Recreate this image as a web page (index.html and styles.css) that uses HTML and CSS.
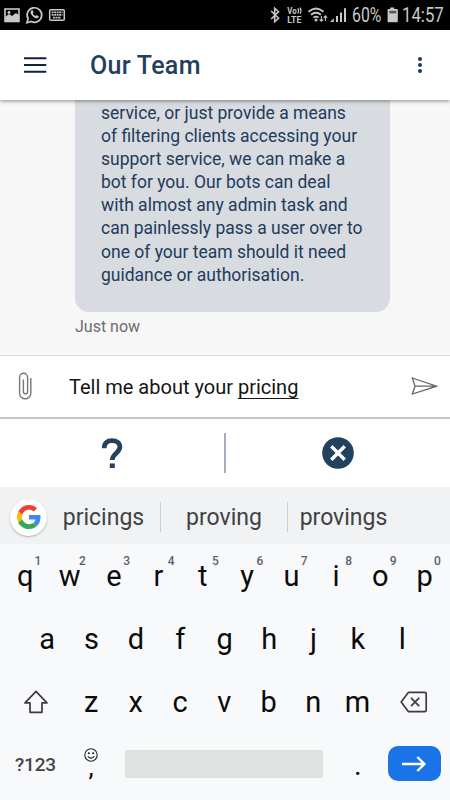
FILE: index.html
```html
<!DOCTYPE html>
<html lang="en">
<head>
<meta charset="utf-8">
<title>Our Team</title>
<link rel="stylesheet" href="styles.css">
</head>
<body>
<div class="phone">
  <div class="status">
    <svg class="status-left" width="70" height="30" viewBox="0 0 70 30" fill="none" stroke="#c8c8c8">
      <rect x="5" y="9" width="14" height="12.5" stroke-width="1.6"/>
      <path d="M5 20v-3l4-3 3 2 4-3 3 2v6H5z" fill="#c8c8c8" stroke="none"/>
      <circle cx="9" cy="12.5" r="1.4" fill="#c8c8c8" stroke="none"/>
      <path d="M26.9 22.8l1.2-4.1a7.3 7.3 0 1 1 2.9 2.8z" stroke-width="1.7"/>
      <path d="M31.4 10.4c-1.4 1-1.2 3 .6 5 1.9 2.3 4.5 3.6 6 2.5l.9-1.5-2.2-1.5-1.2 1c-1.2-.4-2.3-1.5-2.7-2.5l.8-1.1-.8-2z" fill="#c8c8c8" stroke="none"/>
      <rect x="49.7" y="9.7" width="14.6" height="10.6" rx="1" stroke-width="1.5"/>
      <path d="M51.7 12.3h10.8M51.7 14.9h10.8M53 17.6h8" stroke-width="1.7" stroke-dasharray="1.9 .6"/>
    </svg>
    <div class="status-right">
      <svg width="80" height="30" viewBox="0 0 80 30" fill="none" stroke="#c8c8c8">
        <path d="M2.2 11l7.3 7.3-3.8 3.5V8.2l3.8 3.5L2.2 19" stroke-width="1.6"/>
        <g fill="#c8c8c8" stroke="none" class="volte"><text x="18.3" y="14" textLength="9.4" lengthAdjust="spacingAndGlyphs">Vo</text><text x="18.3" y="22.5" textLength="14" lengthAdjust="spacingAndGlyphs">LTE</text></g>
        <path d="M28.8 8.4q1.6 2.2 0 5M31 7.6q2 3 0 6.2" stroke-width="1.2"/>
        <path d="M39.5 11.8q7.5-6.5 15 0M42 14.7q5-4 10 0M44.5 17.6q2.5-2 5 0" stroke-width="1.8"/>
        <circle cx="47" cy="20" r="1.5" fill="#c8c8c8" stroke="none"/>
        <path d="M52.4 16v5M50.6 19.3l1.8 1.9 1.8-1.9M56.4 21v-5M54.6 17.8l1.8-1.9 1.8 1.9" stroke-width="1.1"/>
        <path d="M61.5 22v-.6l3.3-3.1V22z" fill="#c8c8c8" stroke="none"/>
        <path d="M68 22v-6M72 22v-9.5M76 22V8.3" stroke-width="2"/>
      </svg>
      <span class="percent">60%</span>
      <svg width="12" height="30" viewBox="0 0 12 30"><path d="M3.2 7.5h4v1.4H10q.8 0 .8.8v11.8q0 .8-.8.8H1.4q-.8 0-.8-.8V9.7q0-.8.8-.8h1.8z" fill="#c8c8c8"/><path d="M2.3 10.8h6.9v2.6H2.3z" fill="#555"/></svg>
      <span class="clock">14:57</span>
    </div>
  </div>

  <header class="appbar">
    <svg width="24" height="18" viewBox="0 0 24 18"><path d="M0 2.2h22.3M0 9h22.3M0 15.8h22.3" stroke="#0c2247" stroke-width="2.1"/></svg>
    <h1>Our Team</h1>
    <svg class="more" width="6" height="20" viewBox="0 0 6 20" fill="#1e3a58"><circle cx="3" cy="4" r="2"/><circle cx="3" cy="10" r="2"/><circle cx="3" cy="16" r="2"/></svg>
  </header>

  <main class="chat">
    <div class="bubble">
      <span>service, or just provide a means</span>
      <span>of filtering clients accessing your</span>
      <span>support service, we can make a</span>
      <span>bot for you. Our bots can deal</span>
      <span>with almost any admin task and</span>
      <span>can painlessly pass a user over to</span>
      <span>one of your team should it need</span>
      <span>guidance or authorisation.</span>
    </div>
    <div class="stamp">Just now</div>
  </main>

  <div class="composer">
    <svg width="16" height="30" viewBox="0 0 16 30" fill="none" stroke="#777" stroke-width="1.4"><path d="M13.8 7v15.2a5.4 5.4 0 0 1-11.2 0V6.2a4 4 0 0 1 8 0v14.6a2 2 0 0 1-4.2 0V8.5"/></svg>
    <div class="draft">Tell me about your <span>pricing</span></div>
    <svg class="send" width="28" height="20" viewBox="0 0 28 20" fill="none" stroke="#666" stroke-width="1.3"><path d="M2.3 1L26.6 9.2 2.3 17.1 5 9.2zM5 9.2H26"/></svg>
  </div>

  <div class="actions">
    <svg width="22" height="32" viewBox="0 0 22 32" fill="none" stroke="#23415f"><path d="M3.2 11.2C3.2 6 6.2 3.6 11 3.6c4.8 0 7.9 2.4 7.9 6.5 0 5.7-7.6 6.1-7.6 13" stroke-width="4.7"/><path d="M8.8 28.7h5" stroke-width="4.5"/></svg>
    <i></i>
    <svg width="32" height="32" viewBox="0 0 32 32"><circle cx="16" cy="16" r="15.8" fill="#23415f"/><path d="M10.5 10.5l11 11M21.5 10.5l-11 11" stroke="#fff" stroke-width="3.4" stroke-linecap="square"/></svg>
  </div>

  <div class="suggest">
    <div class="google"><svg width="24" height="24" viewBox="0 0 48 48"><path fill="#EA4335" d="M24 9.5c3.54 0 6.71 1.22 9.21 3.6l6.85-6.85C35.9 2.38 30.47 0 24 0 14.62 0 6.51 5.38 2.56 13.22l7.98 6.19C12.43 13.72 17.74 9.5 24 9.5z"/><path fill="#4285F4" d="M46.98 24.55c0-1.57-.15-3.09-.38-4.55H24v9.02h12.94c-.58 2.96-2.26 5.48-4.78 7.18l7.73 6c4.51-4.18 7.09-10.36 7.09-17.65z"/><path fill="#FBBC05" d="M10.53 28.59A14.5 14.5 0 0 1 9.77 24c0-1.6.27-3.14.76-4.59l-7.98-6.19A23.9 23.9 0 0 0 0 24c0 3.88.92 7.54 2.56 10.78z"/><path fill="#34A853" d="M24 48c6.48 0 11.93-2.13 15.89-5.81l-7.73-6c-2.15 1.45-4.92 2.3-8.16 2.3-6.26 0-11.57-4.22-13.47-9.91l-7.98 6.19C6.51 42.62 14.62 48 24 48z"/></svg></div>
    <span>pricings</span><span>proving</span><span>provings</span>
  </div>

  <div class="keyboard">
    <div class="row top">
      <b>q<sup>1</sup></b><b>w<sup>2</sup></b><b>e<sup>3</sup></b><b>r<sup>4</sup></b><b>t<sup>5</sup></b><b>y<sup>6</sup></b><b>u<sup>7</sup></b><b>i<sup>8</sup></b><b>o<sup>9</sup></b><b>p<sup>0</sup></b>
    </div>
    <div class="row middle"><b>a</b><b>s</b><b>d</b><b>f</b><b>g</b><b>h</b><b>j</b><b>k</b><b>l</b></div>
    <div class="row lower">
      <div class="wide"><svg width="26" height="26" viewBox="0 0 26 26" fill="none" stroke="#3c3c3f" stroke-width="1.7" stroke-linejoin="round"><path d="M13 2.4L24 13.9h-5v9.4H7v-9.4H2z"/></svg></div>
      <b>z</b><b>x</b><b>c</b><b>v</b><b>b</b><b>n</b><b>m</b>
      <div class="wide erase"><svg width="28" height="22" viewBox="0 0 28 22" fill="none" stroke="#3c3c3f" stroke-width="1.7" stroke-linejoin="round"><path d="M8.5 1.3h16.2q1.5 0 1.5 1.5v16.4q0 1.5-1.5 1.5H8.5L1.2 11zM11 6.8l8.2 8.4M19.2 6.8L11 15.2"/></svg></div>
    </div>
    <div class="row bottom">
      <span class="symbols">?123</span>
      <div class="comma">
        <svg width="14" height="14" viewBox="0 0 14 14" fill="none" stroke="#222" stroke-width="1.1"><circle cx="7" cy="7" r="6.2"/><path d="M3.8 8.3q3.2 3.6 6.4 0"/><circle cx="4.8" cy="5.2" r=".5" fill="#222"/><circle cx="9.2" cy="5.2" r=".5" fill="#222"/></svg>
        <span>,</span>
      </div>
      <div class="space"></div>
      <span class="dot">.</span>
      <div class="enter"><svg width="26" height="18" viewBox="0 0 26 18" fill="none" stroke="#fff" stroke-width="2.3"><path d="M1 9h22.5M16.3 2l7.2 7-7.2 7"/></svg></div>
    </div>
  </div>
</div>
</body>
</html>
```

FILE: styles.css
```css
* { box-sizing: border-box; }
body { margin: 0; font-family: Roboto, "Liberation Sans", sans-serif; }
svg { display: block; flex: none; }
.phone { width: 450px; height: 800px; overflow: hidden; display: flex; flex-direction: column; background: #fff; }
.phone > * { flex: none; }

.status { height: 30px; background: #000; color: #c8c8c8; display: flex; justify-content: space-between; }
.status-right { display: flex; align-items: center; width: 181px; }
.percent, .clock { font-size: 19.5px; line-height: 30px; white-space: nowrap; transform-origin: 0 50%; flex: none; }
.percent { width: 30px; margin: 1px 5px 0 3px; transform: scaleX(.81); }
.clock { margin: 1px 0 0 3px; transform: scaleX(.86); }
.volte { font-size: 9px; font-weight: 700; }

.appbar { height: 70px; display: flex; align-items: center; padding: 0 27px 0 24px; background: #fff; box-shadow: 0 1px 4px rgba(0, 0, 0, .45); z-index: 1; }
.appbar h1 { margin: 0 0 0 42px; font-size: 25px; font-weight: 500; color: #243f5e; letter-spacing: .3px; }
.more { margin-left: auto; }

.chat { height: 255px; background: #f7f7f7; padding-left: 75px; overflow: hidden; }
.bubble { width: 315px; height: 212px; background: #d8dbe0; border-radius: 0 0 14px 14px; color: #213c5c; padding: 2px 0 0 26px; font-size: 17.5px; line-height: 23.1px; }
.bubble span { display: block; white-space: nowrap; }
.stamp { font-size: 16px; line-height: 20px; margin-top: 5px; color: #6c6c6c; }

.composer { height: 64px; display: flex; align-items: center; border-top: 1px solid #ddd; border-bottom: 2px solid #c3c5c6; padding: 0 12px 0 17px; }
.composer > svg:first-child { margin-top: -2px; }
.draft { font-size: 20px; margin: 0 0 0 36px; color: #151515; white-space: nowrap; line-height: 24px; }
.draft span { text-decoration: underline; text-decoration-thickness: 1px; text-decoration-skip-ink: none; text-underline-offset: 4px; }
.send { margin-left: auto; }

.actions { height: 68px; display: flex; align-items: center; padding: 0 96px 0 101px; justify-content: space-between; }
.actions i { width: 2px; height: 40px; background: #a4aebd; margin-left: 4px; }

.suggest { height: 57px; background: #f0f2f3; display: flex; align-items: center; color: #3f4144; font-size: 23px; padding: 3px 0 0 10px; }
.google { width: 37px; height: 37px; border-radius: 50%; background: #fff; box-shadow: 0 1px 2px rgba(0, 0, 0, .28); display: flex; align-items: center; justify-content: center; }
.suggest span { height: 30px; line-height: 31px; text-align: center; }
.suggest span:nth-of-type(1) { width: 113px; }
.suggest span:nth-of-type(2) { width: 128px; border-left: 1px solid #cbcdd0; border-right: 1px solid #cbcdd0; }
.suggest span:nth-of-type(3) { width: 111px; }

.keyboard { height: 256px; background: #f8f9fb; }
.row { display: flex; height: 63px; align-items: center; color: #0b0b0b; font-size: 29px; line-height: 34px; }
.row b { font-weight: 400; width: 44.4px; text-align: center; position: relative; flex: none; }
.row sup { position: absolute; left: 31.5px; top: -5px; font-size: 12px; line-height: 14px; font-weight: 500; color: #606164; }
.top { padding: 0 3px; }
.middle { padding-left: 25px; }
.wide { width: 66px; display: flex; justify-content: center; padding-top: 1px; }
.lower { padding-left: 3px; }
.erase { padding-left: 3px; }
.bottom { height: 64px; }
.symbols { width: 61px; margin-left: 15px; font-size: 19px; line-height: 32px; font-weight: 500; color: #444548; letter-spacing: -.2px; }
.comma { width: 30px; display: flex; flex-direction: column; align-items: center; margin-top: -3px; }
.comma span { height: 17px; line-height: 11px; font-size: 26px; }
.space { width: 198px; height: 28px; margin: -2px 0 0 19px; border-radius: 3px; background: #e0e2e1; }
.dot { width: 64.5px; padding-left: 31px; }
.enter { width: 53px; height: 35px; margin-top: -3px; background: #1b73e8; border-radius: 10px; display: flex; align-items: center; justify-content: center; }
```
